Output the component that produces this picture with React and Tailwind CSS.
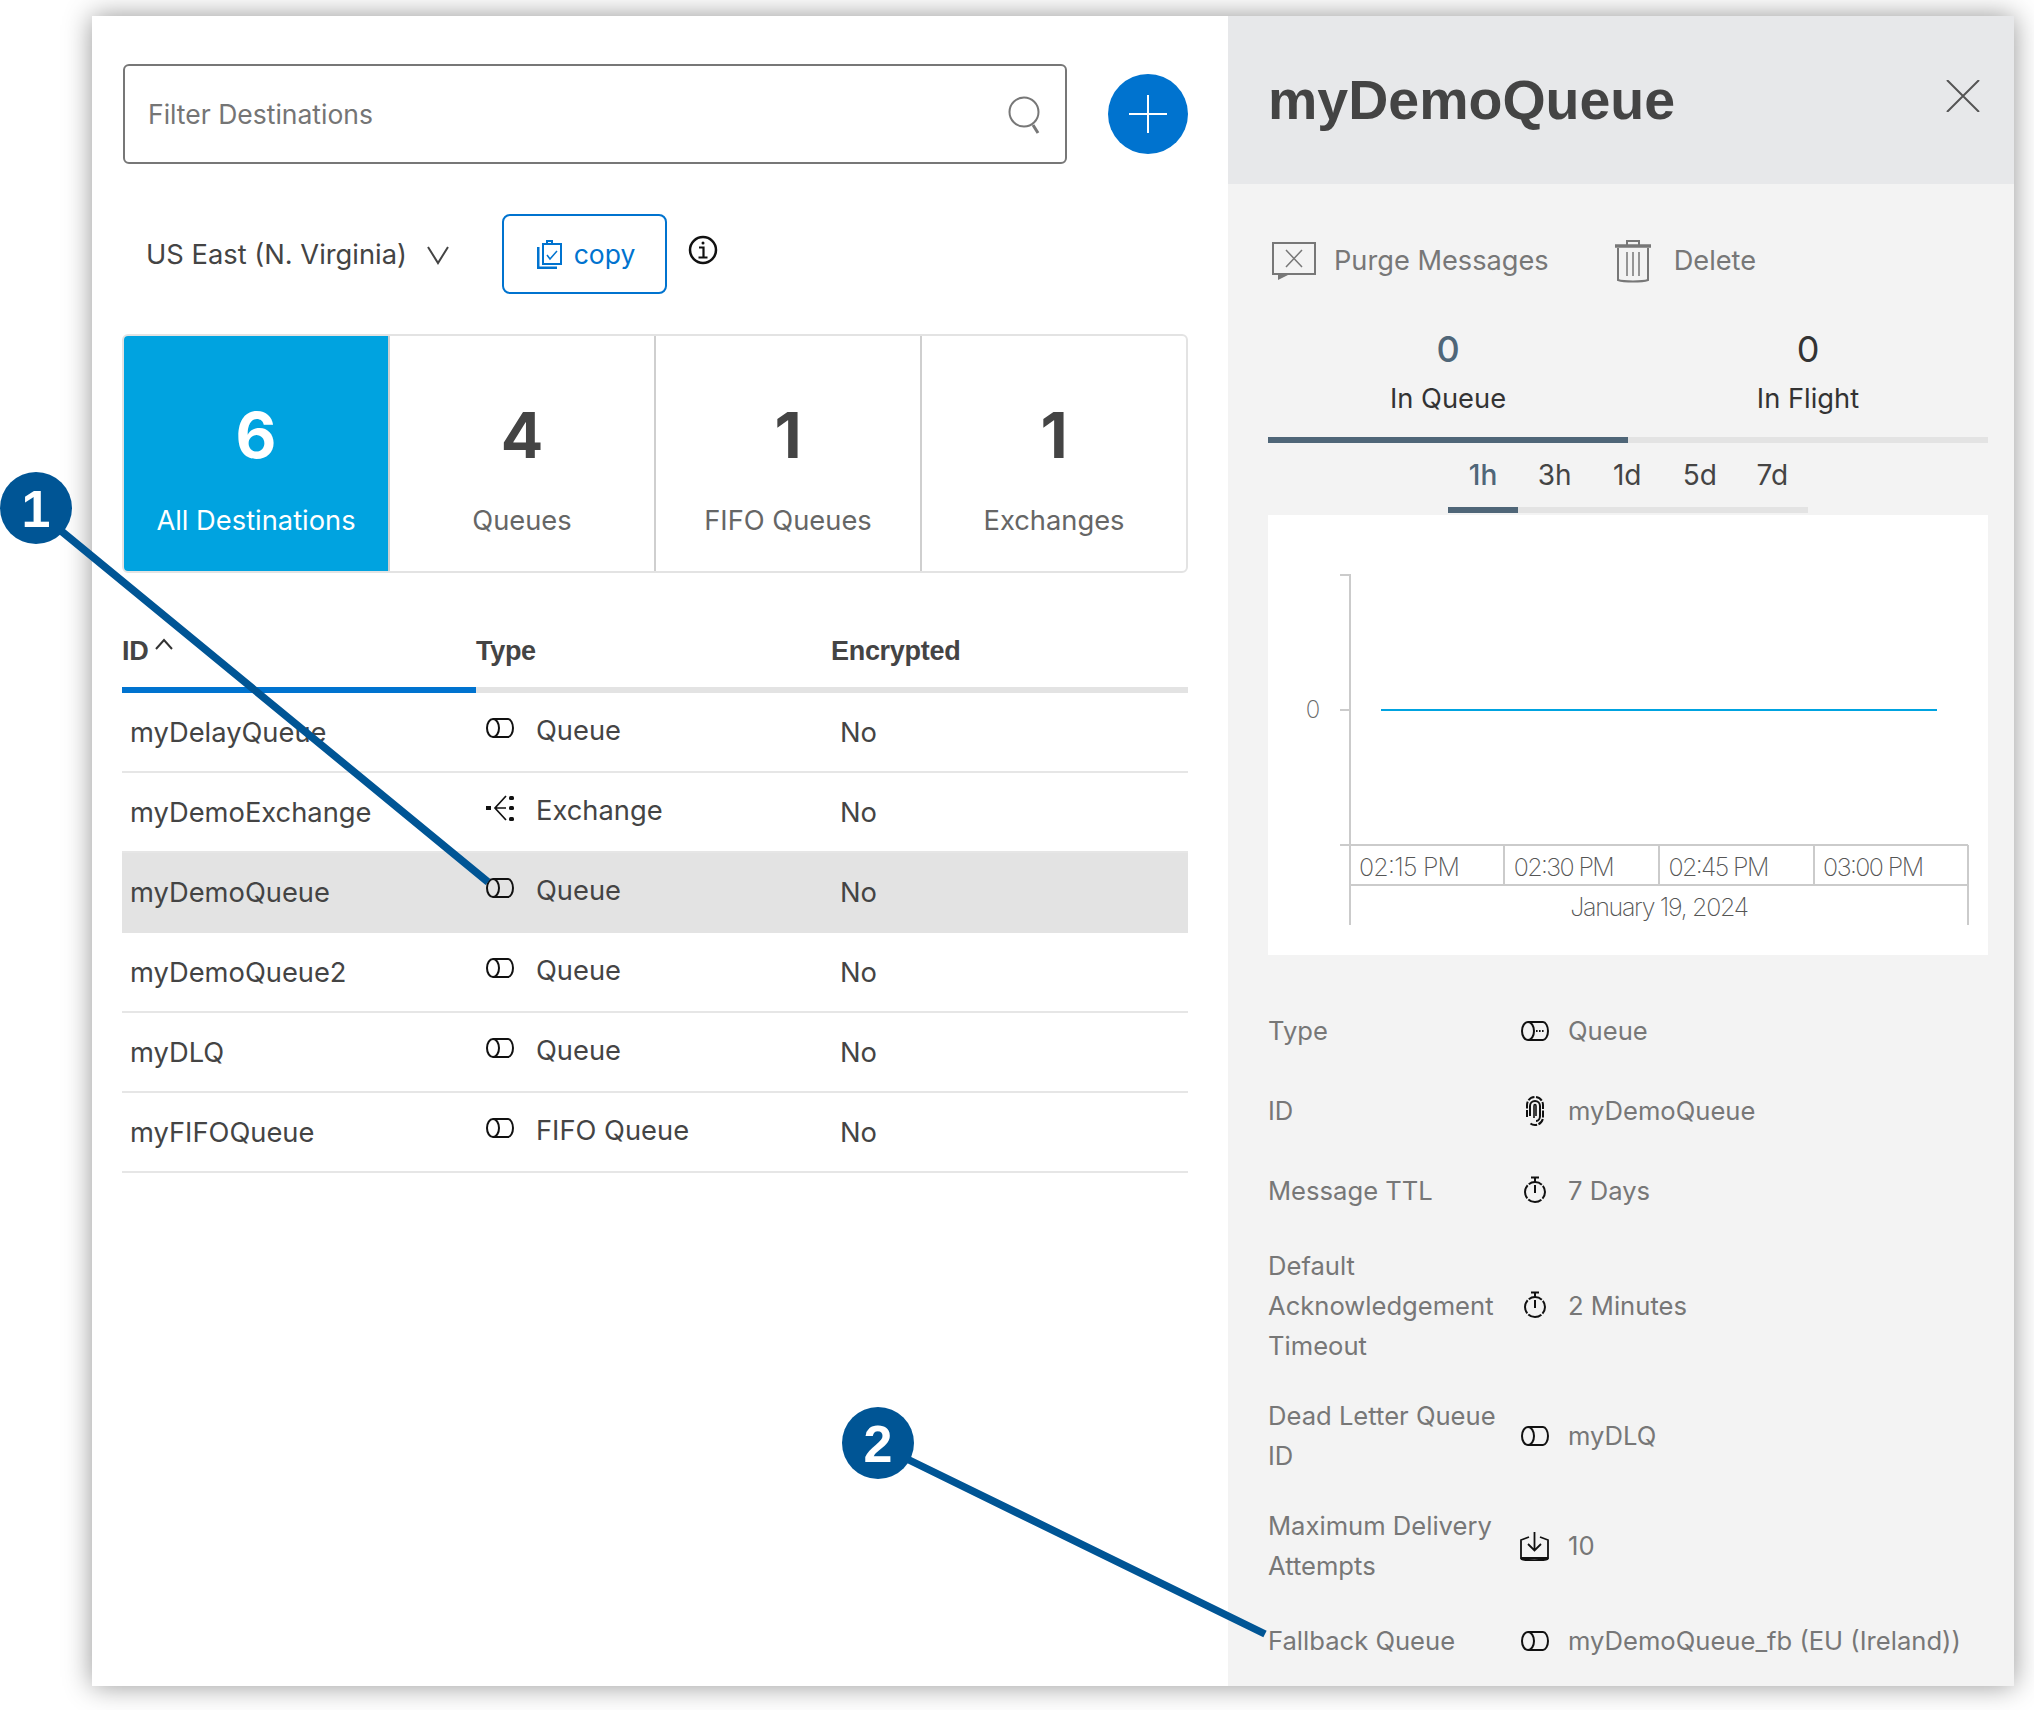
const rows = [
  { id: "myDelayQueue", type: "Queue" },
  { id: "myDemoExchange", type: "Exchange" },
  { id: "myDemoQueue", type: "Queue", selected: true },
  { id: "myDemoQueue2", type: "Queue" },
  { id: "myDLQ", type: "Queue" },
  { id: "myFIFOQueue", type: "FIFO Queue" },
];

const tabs = [
  { count: 6, label: "All Destinations", active: true },
  { count: 4, label: "Queues" },
  { count: 1, label: "FIFO Queues" },
  { count: 1, label: "Exchanges" },
];

function QueueIcon({ dots }) {
  return (
    <svg width="28" height="20" viewBox="0 0 28 20" fill="none" stroke="#111" strokeWidth="2">
      <path d="M7 1h15c2.500 0 5 4 5 9s-2.500 9-5 9H7c-3.300 0-6-4-6-9s2.700-9 6-9z" />
      <path d="M7 1c3.300 0 6 4 6 9s-2.700 9-6 9" />
      {dots && <path d="M15 10h8" strokeDasharray="1.600 1.400" />}
    </svg>
  );
}

function ExchangeIcon() {
  return (
    <svg width="28" height="26" viewBox="0 0 28 26" fill="#111" stroke="none">
      <rect x="0" y="11" width="5" height="4" />
      <rect x="23" y="1" width="5" height="4" rx="1.500" />
      <rect x="23" y="11" width="5" height="4" rx="1.500" />
      <rect x="23" y="22" width="5" height="4" rx="1.500" />
      <path d="M20 1L9 13l11 12M9 13h11" fill="none" stroke="#111" strokeWidth="1.700" />
    </svg>
  );
}

function FingerprintIcon() {
  return (
    <svg width="20" height="30" viewBox="0 0 20 30" fill="none" stroke="#111" strokeWidth="2">
      <path d="M2 21V9c0-4.500 3.500-8 8-8s8 3.500 8 8v12c0 4.500-3.500 8-8 8-2 0-3.500-.5-5-2" strokeDasharray="7 1.500" />
      <path d="M5 20V10c0-3 2.200-5 5-5s5 2 5 5v10c0 2.500-1.500 5-4 5" />
      <path d="M9 22V10c0-.8.4-1.500 1-1.500s1 .7 1 1.500v10" strokeWidth="1.600" />
    </svg>
  );
}

function WatchIcon() {
  return (
    <svg width="24" height="28" viewBox="0 0 24 28" fill="none" stroke="#111" strokeWidth="2" className="-mt-[2px]">
      <path d="M8 1.500h8M12 1.500v5" />
      <circle cx="12" cy="16" r="10" strokeDasharray="14.200 1.500" strokeDashoffset="7" />
      <path d="M12 9v8" />
    </svg>
  );
}

function InboxIcon() {
  return (
    <svg width="29" height="30" viewBox="0 0 29 30" fill="none" stroke="#111" strokeWidth="1.800">
      <path d="M14.500 1v18M8 13l6.500 6.500L21 13" />
      <path d="M9 6L1 9v18h27V9l-8-3" />
      <path d="M1 27.500c6 2.500 21 2.500 27 0" strokeWidth="2.500" />
    </svg>
  );
}

const details = [
  { label: "Type", icon: <QueueIcon dots />, value: "Queue" },
  { label: "ID", icon: <FingerprintIcon />, value: "myDemoQueue" },
  { label: "Message TTL", icon: <WatchIcon />, value: "7 Days" },
  { label: "Default Acknowledgement Timeout", icon: <WatchIcon />, value: "2 Minutes", multi: true },
  { label: "Dead Letter Queue ID", icon: <QueueIcon />, value: "myDLQ", multi: true },
  { label: "Maximum Delivery Attempts", icon: <InboxIcon />, value: "10", multi: true },
  { label: "Fallback Queue", icon: <QueueIcon />, value: "myDemoQueue_fb (EU (Ireland))" },
];

function Chart() {
  const ticks = ["02:15 PM", "02:30 PM", "02:45 PM", "03:00 PM"];
  return (
    <svg width="720" height="440" viewBox="0 0 720 440" className="block">
      <path d="M72 60h10V330M72 195h10M72 330h628M82 330v80M700 330v80M82 370h618M236 330v40M391 330v40M546 330v40" fill="none" stroke="#cbcbcb" strokeWidth="2" />
      <path d="M113 195h556" stroke="#00a3e0" strokeWidth="2" />
      <text x="45" y="203" textAnchor="middle" fontSize="24" fontWeight="200" fill="#666" fontFamily="Inter, sans-serif">0</text>
      {ticks.map((t, i) => (
        <text key={t} x={91 + i * 154.700} y="361" fontSize="25" fontWeight="200" textLength="101" fill="#555" fontFamily="Inter, sans-serif">{t}</text>
      ))}
      <text x="391" y="401" textAnchor="middle" fontSize="25" fontWeight="200" letterSpacing="-1.300" fill="#555" fontFamily="Inter, sans-serif">January 19, 2024</text>
    </svg>
  );
}

export default function App() {
  return (
    <div className="relative w-[2034px] h-[1710px] bg-white overflow-hidden pt-4 pl-[92px] font-[Inter,sans-serif]">
      <div className="flex w-[1922px] h-[1670px] bg-white shadow-[0_0_26px_rgba(0,0,0,0.42)]">

        {/* Left side - destination list */}
        <div className="w-[1136px] pl-[30px] pr-10 pt-12">
          <div className="flex justify-between">
            <div className="flex items-center justify-between w-[944px] h-[100px] ml-px pl-[23px] pr-6 border-2 border-[#777] rounded-md">
              <span className="mt-[2px] text-[26.500px] text-[#757575]">Filter Destinations</span>
              <svg width="34" height="38" viewBox="0 0 34 38" fill="none" stroke="#777" strokeWidth="2" className="mr-[-1px] mt-[2px]">
                <circle cx="16" cy="16" r="14.500" />
                <path d="M25 29l5 8" strokeWidth="3" />
              </svg>
            </div>
            <button className="flex items-center justify-center size-20 mt-[10px] rounded-full bg-[#0073cf]">
              <svg width="38" height="38" viewBox="0 0 38 38" stroke="#fff" strokeWidth="2">
                <path d="M19 0v38M0 19h38" />
              </svg>
            </button>
          </div>

          <div className="flex items-center mt-[50px] h-20 pl-6">
            <span className="w-[280px] mt-[3px] text-[27.300px] text-[#444]">US East (N. Virginia)</span>
            <svg width="24" height="20" viewBox="0 0 24 20" fill="none" stroke="#444" strokeWidth="2" className="mt-[2px]">
              <path d="M2 2l10 16L22 2" />
            </svg>
            <button className="flex items-center justify-center gap-3 w-[165px] h-20 ml-[52px] pl-[3px] border-2 border-[#0073cf] rounded-lg text-[#0073cf] text-[26.500px]">
              <svg width="25" height="29" viewBox="0 0 25 29" fill="none" stroke="#0073cf" strokeWidth="2">
                <path d="M6 4h4V1h5v3h9v20H6zM10 4h5" />
                <path d="M1 7v21h19" strokeWidth="3" />
                <path d="M10 15l3 4 7-8" strokeWidth="1.500" />
              </svg>
              <span className="mt-[2px]">copy</span>
            </button>
            <svg width="30" height="30" viewBox="0 0 30 30" fill="none" stroke="#111" className="ml-[21px] -mt-[9px]">
              <circle cx="15" cy="15" r="13" strokeWidth="2.500" />
              <path d="M11 12.500h4.500V22M10.500 22.500h9" strokeWidth="2.200" />
              <circle cx="15" cy="8" r="1.500" fill="#111" stroke="none" />
            </svg>
          </div>

          <div className="flex mt-10 h-[239px] border-2 border-[#e3e3e3] rounded-md overflow-hidden">
            {tabs.map((tab) => (
              <div
                key={tab.label}
                className={`flex-1 flex flex-col items-center border-r-2 border-[#cfcfcf] last:border-r-0 ${tab.active ? "bg-[#00a3e0] text-white" : "text-[#444]"}`}
              >
                <span className="mt-[63px] h-[72px] text-[63px] leading-[72px] font-bold">{tab.count}</span>
                <span className={`mt-[30px] text-[27.300px] leading-10 ${tab.active ? "text-white" : "text-[#666]"}`}>{tab.label}</span>
              </div>
            ))}
          </div>

          <div className="grid grid-cols-[354px_355px_1fr] h-[114px] items-end pb-[16px] text-[27px] leading-10 font-bold text-[#444] font-['Liberation_Sans',sans-serif] tracking-[-0.300px]">
            <div className="flex items-start gap-[7px]">
              ID
              <svg width="18" height="12" viewBox="0 0 18 12" fill="none" stroke="#333" strokeWidth="2" className="mt-[7px]">
                <path d="M1 11l8-9 8 9" />
              </svg>
            </div>
            <div>Type</div>
            <div>Encrypted</div>
          </div>
          <div className="grid grid-cols-[354px_1fr] h-[6px] bg-[#e3e3e3]">
            <div className="bg-[#0073cf]"></div>
          </div>

          {rows.map((row) => (
            <div
              key={row.id}
              className={`grid grid-cols-[354px_355px_1fr] items-center h-20 border-b-2 text-[27.300px] text-[#444] ${row.selected ? "bg-[#e3e3e3] border-[#e3e3e3]" : "border-[#e6e6e6]"}`}
            >
              <div className="pl-2 mt-[2px]">{row.id}</div>
              <div className="flex items-center pl-[10px] -mt-[2px]">
                <div className="flex justify-center w-[28px] -translate-y-[3px]">
                  {row.type === "Exchange" ? <ExchangeIcon /> : <QueueIcon />}
                </div>
                <span className="ml-[22px]">{row.type}</span>
              </div>
              <div className="pl-[9px] mt-[2px]">No</div>
            </div>
          ))}
        </div>

        {/* Right side - queue details */}
        <div className="w-[786px] bg-[#f3f3f3]">
          <div className="flex items-start justify-between h-[168px] bg-[#e7e8ea] pl-10 pr-[34px]">
            <h1 className="mt-[51px] text-[55.500px] leading-[66px] font-bold text-[#444] font-['Liberation_Sans',sans-serif]">myDemoQueue</h1>
            <svg width="34" height="32" viewBox="0 0 34 32" stroke="#555" strokeWidth="2" className="mt-16">
              <path d="M1 0l32 32M33 0L1 32" />
            </svg>
          </div>

          <div className="pl-10 pr-[26px]">
            <div className="flex items-center mt-[56px] h-[42px] text-[27.200px] text-[#777]">
              <svg width="44" height="40" viewBox="0 0 44 40" fill="none" stroke="#777" strokeWidth="2" className="ml-1">
                <path d="M1 2h42v31H1z" />
                <path d="M14 9l16 17M30 9L14 26" strokeWidth="1.500" />
                <path d="M6 33h12l-12 6z" fill="#777" stroke="none" />
              </svg>
              <span className="ml-[18px]">Purge Messages</span>
              <svg width="38" height="44" viewBox="0 0 38 44" fill="none" stroke="#777" strokeWidth="2" className="ml-[65px]">
                <path d="M13 6V2h12v4" />
                <path d="M1 7h36" strokeWidth="3.500" />
                <path d="M4 9v32c6 2 24 2 30 0V9" />
                <path d="M13 13v24M19 13v24M25 13v24" strokeWidth="1.500" />
              </svg>
              <span className="ml-[22px]">Delete</span>
            </div>

            <div className="flex mt-[45px]">
              <div className="w-1/2 flex flex-col items-center border-b-[6px] border-[#4f6678]">
                <span className="h-[44px] text-[36px] leading-[44px] font-medium text-[#4f6678]">0</span>
                <span className="mt-[8px] mb-[18px] h-10 text-[27.300px] leading-10 text-[#333]">In Queue</span>
              </div>
              <div className="w-1/2 flex flex-col items-center border-b-[6px] border-[#e3e3e3]">
                <span className="h-[44px] text-[36px] leading-[44px] text-[#333]">0</span>
                <span className="mt-[8px] mb-[18px] h-10 text-[27.300px] leading-10 text-[#333]">In Flight</span>
              </div>
            </div>

            <div className="flex w-[360px] mx-auto mt-3">
              {["1h", "3h", "1d", "5d", "7d"].map((r, i) => (
                <div
                  key={r}
                  className={`h-[58px] leading-10 text-center text-[28px] border-b-[6px] ${i === 0 ? "w-[70px] border-[#4f6678] text-[#4f6678] font-medium" : "w-[72.500px] pl-px border-[#e3e3e3] text-[#444]"}`}
                >
                  {r}
                </div>
              ))}
            </div>

            <div className="mt-[2px] h-[440px] bg-white">
              <Chart />
            </div>

            <div className="mt-9 text-[25.600px] leading-10 text-[#777]">
              {details.map((d) => (
                <div key={d.label} className={`flex items-center ${d.multi ? "py-[15px]" : "py-5"}`}>
                  <div className="w-[236px] mr-4 shrink-0">{d.label}</div>
                  <div className="flex justify-center w-[29px] mr-[19px] shrink-0">{d.icon}</div>
                  <div className="whitespace-nowrap">{d.value}</div>
                </div>
              ))}
            </div>
          </div>
        </div>
      </div>

      {/* Callouts on top of the screenshot */}
      <svg width="2034" height="1710" viewBox="0 0 2034 1710" className="absolute inset-0 pointer-events-none">
        <path d="M60 530L488 882M905 1458L1265 1634" stroke="#005595" strokeWidth="7.500" fill="none" />
      </svg>
      <div className="absolute left-0 top-[472px] flex items-center justify-center size-[72px] pt-[2px] rounded-full bg-[#005595] text-white text-[52px] font-bold font-['Liberation_Sans',sans-serif]">1</div>
      <div className="absolute left-[842px] top-[1407px] flex items-center justify-center size-[72px] pt-[2px] rounded-full bg-[#005595] text-white text-[52px] font-bold font-['Liberation_Sans',sans-serif]">2</div>
    </div>
  );
}
